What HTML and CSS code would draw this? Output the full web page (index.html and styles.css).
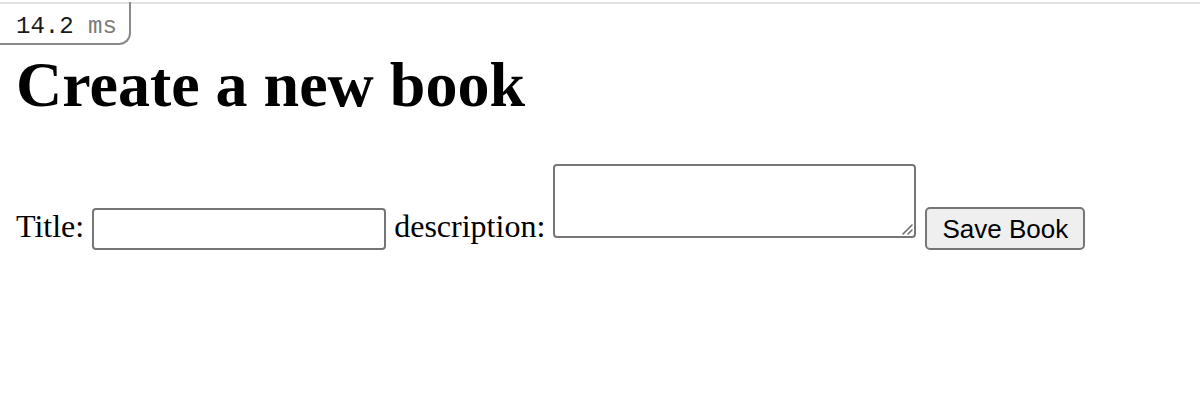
FILE: index.html
```html
<!DOCTYPE html>
<html>
<head>
<meta charset="utf-8">
<link rel="stylesheet" href="styles.css">
</head>
<body>
<div class="topline"></div>
<div class="timer"><span class="num">14.2</span> <span class="unit">ms</span></div>
<main class="page">
  <h1 class="title">Create a new book</h1>
  <form class="form">
    <label class="label" for="t">Title:</label>
    <input class="input" id="t" type="text">
    <label class="label" for="d">description:</label>
    <div class="area-wrap">
      <textarea class="area" id="d"></textarea>
      <svg class="grip" width="16" height="16" viewBox="0 0 16 16"><path d="M14 5 L5 14 M14 10 L10 14" stroke="#6f6f6f" stroke-width="1.6" fill="none" stroke-linecap="round"/></svg>
    </div>
    <button class="btn" type="button">Save Book</button>
  </form>
</main>
</body>
</html>
```

FILE: styles.css
```css
html, body {
  margin: 0;
  padding: 0;
  background: #fff;
}
body {
  position: relative;
  font-family: "Liberation Serif", "Times New Roman", serif;
  color: #000;
}
.topline {
  height: 2px;
  margin-top: 2px;
  background: #e2e2e2;
}
.timer {
  position: absolute;
  top: 2px;
  left: 0;
  box-sizing: border-box;
  width: 131px;
  height: 43px;
  padding: 12px 0 0 16px;
  border-right: 2px solid #8a8a8a;
  border-bottom: 2px solid #8a8a8a;
  border-bottom-right-radius: 12px;
  font-family: "Liberation Mono", "Courier New", monospace;
  font-size: 24px;
  line-height: 26px;
  white-space: pre;
}
.timer .num { color: #1a1a1a; }
.timer .unit { color: #7a7a7a; }
.page {
  padding: 0 16px;
}
.title {
  margin: 44px 0 0;
  font-size: 64px;
  line-height: 74px;
  font-weight: bold;
}
.form {
  display: flex;
  align-items: flex-start;
  gap: 8px;
  margin-top: 42px;
}
.label {
  margin-top: 46px;
  font-size: 32px;
  line-height: 32px;
}
.input {
  box-sizing: border-box;
  width: 294px;
  height: 42px;
  margin: 44px 0 0;
  border: 2px solid #767676;
  border-radius: 4px;
  background: #fff;
  padding: 0 4px;
}
.area-wrap {
  position: relative;
  width: 363px;
  height: 74px;
}
.area {
  display: block;
  box-sizing: border-box;
  width: 363px;
  height: 74px;
  margin: 0;
  border: 2px solid #767676;
  border-radius: 4px;
  background: #fff;
  resize: none;
}
.grip {
  position: absolute;
  right: 2px;
  bottom: 2px;
}
.btn {
  box-sizing: border-box;
  width: 160px;
  height: 43px;
  margin: 43px 0 0 1px;
  border: 2px solid #767676;
  border-radius: 5px;
  background: #efefef;
  font-family: "Liberation Sans", Arial, sans-serif;
  font-size: 26px;
  color: #000;
  padding: 2px 0 0;
}
```
